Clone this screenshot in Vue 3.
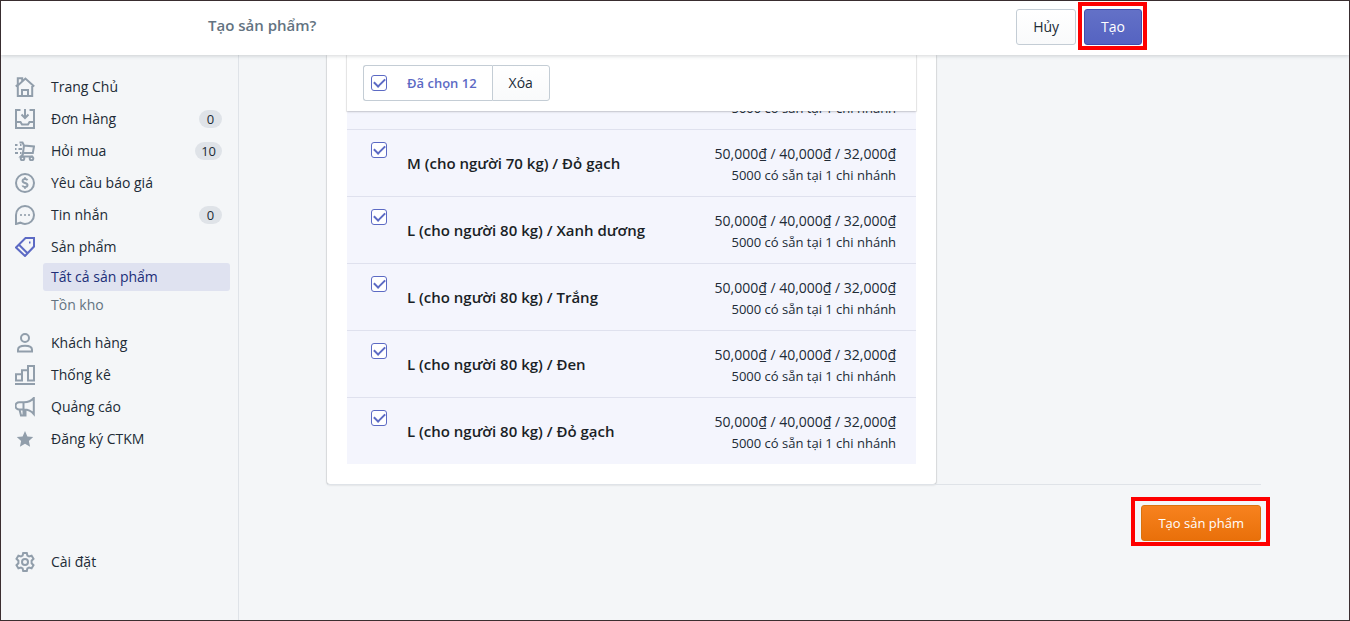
<script setup>
import {ref, computed} from "vue";

const menu = [
  {icon: 'home', label: 'Trang Chủ'},
  {icon: 'orders', label: 'Đơn Hàng', badge: 0},
  {icon: 'cart', label: 'Hỏi mua', badge: 10},
  {icon: 'quote', label: 'Yêu cầu báo giá'},
  {icon: 'chat', label: 'Tin nhắn', badge: 0},
  {icon: 'tag', label: 'Sản phẩm', active: true, children: ['Tất cả sản phẩm', 'Tồn kho']},
  {icon: 'user', label: 'Khách hàng'},
  {icon: 'stats', label: 'Thống kê'},
  {icon: 'ads', label: 'Quảng cáo'},
  {icon: 'star', label: 'Đăng ký CTKM'},
]

// svg contents, all drawn on a 20x20 grid
const icons = {
  home: '<path d="M2.8 9v10h14.4V9M.8 9.6 3 7.6M19.2 9.6 10.4 1.6 2.8 8.4V1.3h4.4v2.8M7 19v-6h6v6"/>',
  orders: '<path d="M5.5 1H1v18h18V1h-4.500M10 0v8.500M6.500 5.500 10 9l3.500-3.500M1 13h4.500l1.500 2.500h6l1.500-2.500H19"/>',
  cart: '<path d="M4.500 1.500h3L9 4.500l10 1-1.200 6.500H8.500M9 4.500 7.800 13.500 5.800 15.500H18M0 4h2.500M5 4h1.500M0 8h1.500M3.500 8H7M0 12h3M5 12h1.500"/><circle cx="7.500" cy="17.500" r="1.800"/><circle cx="16.500" cy="17.500" r="1.800"/>',
  quote: '<circle cx="10" cy="10" r="9"/><path d="M12.500 7.200C12 6.300 11 6 10 6c-1.500 0-2.400.8-2.400 1.900C7.600 10.600 12.500 9.300 12.500 12c0 1.200-1 2-2.500 2-1.200 0-2.200-.5-2.600-1.500M10 4.200V6M10 14v1.800"/>',
  chat: '<path d="M1 19V10a9 9 0 1 1 9 9c-1.800 0-3.300-.5-4.600-1.300Z"/><path d="M5.200 10h1.600M9.200 10h1.600M13.200 10h1.600"/>',
  tag: '<path d="M1 10.500 10.500 1H19v8.500L10 19ZM4 7.800l8.500 8.500"/><path d="M14 5.500h1.500"/>',
  user: '<circle cx="10" cy="5" r="4"/><path d="M3 18.500v-1.800C3 14.500 5.500 12.800 10 12.800s7 1.700 7 3.900v1.800Z"/>',
  stats: '<path d="M0 19h20M1 15.500V9.300h6v6.200ZM7 15.500V5.300h6v10.200M13 15.500V1h6v14.500Z"/>',
  ads: '<path d="M18.800 1c-2.500 2.800-5.500 4.200-9.800 4.200H4.200a3.600 3.600 0 0 0 0 7.300H9c4.300 0 7.300 1.500 9.800 4.500ZM8.500 5.200v13.300H6L4.500 12.500M8.500 18.500h2v-6"/>',
  star: '<path class="solid" d="m10 2 2.400 5.400 5.800.6-4.300 3.900 1.200 5.800L10 14.800l-5.100 2.900 1.200-5.800L1.800 8l5.800-.6Z"/>',
  gear: '<path d="M8.200 1h3.600l.6 2.500 1.700 1 2.500-.8 1.900 3.100-1.900 1.900v2.600l1.900 1.900-1.900 3.100-2.500-.8-1.700 1-.6 2.500H8.200l-.6-2.500-1.700-1-2.500.8-1.900-3.100 1.900-1.900V8.700L1.500 6.800l1.900-3.100 2.500.8 1.700-1Z"/><circle cx="10" cy="10" r="3"/>',
}

const variants = ref([
  {name: 'M (cho người 70 kg) / Đỏ gạch', checked: true},
  {name: 'L (cho người 80 kg) / Xanh dương', checked: true},
  {name: 'L (cho người 80 kg) / Trắng', checked: true},
  {name: 'L (cho người 80 kg) / Đen', checked: true},
  {name: 'L (cho người 80 kg) / Đỏ gạch', checked: true},
])

const prices = '50,000₫ / 40,000₫ / 32,000₫'
const stock = '5000 có sẵn tại 1 chi nhánh'

// the variants above the visible part of the list
const above = 7
const selected = computed(() => above + variants.value.filter(v => v.checked).length)
const all = computed({
  get: () => variants.value.every(v => v.checked),
  set: (val) => variants.value.forEach(v => v.checked = val),
})
</script>

<template>
  <div class="app">

    <header class="topbar">
      <div class="topbar_inner">
        <h1>Tạo sản phẩm?</h1>
        <div class="actions">
          <button type="button" class="btn">Hủy</button>
          <span class="marked">
            <button type="button" class="btn primary">Tạo</button>
          </span>
        </div>
      </div>
    </header>

    <div class="body">
      <nav class="sidebar">
        <ul class="menu">
          <li v-for="item in menu" :key="item.label">
            <a href="#" class="item" :class="{active: item.active}">
              <svg viewBox="0 0 20 20" v-html="icons[item.icon]"></svg>
              <span class="label">{{ item.label }}</span>
              <span v-if="item.badge !== undefined" class="badge">{{ item.badge }}</span>
            </a>
            <ul v-if="item.children" class="submenu">
              <li v-for="(child, i) in item.children" :key="child">
                <a href="#" class="subitem" :class="{current: i === 0}">{{ child }}</a>
              </li>
            </ul>
          </li>
        </ul>
        <a href="#" class="item settings">
          <svg viewBox="0 0 20 20" v-html="icons.gear"></svg>
          <span class="label">Cài đặt</span>
        </a>
      </nav>

      <main class="main">
        <div class="page">
          <section class="card">
            <div class="toolbar">
              <div class="group">
                <label class="select_all">
                  <input type="checkbox" class="check" v-model="all"/>
                  <span>Đã chọn {{ selected }}</span>
                </label>
                <button type="button" class="btn joined">Xóa</button>
              </div>
            </div>

            <div class="row clipped">
              <div class="info">
                <div class="stock">{{ stock }}</div>
              </div>
            </div>

            <label v-for="v in variants" :key="v.name" class="row">
              <input type="checkbox" class="check" v-model="v.checked"/>
              <span class="name">{{ v.name }}</span>
              <span class="info">
                <span class="price">{{ prices }}</span>
                <span class="stock">{{ stock }}</span>
              </span>
            </label>
          </section>

          <footer class="page_actions">
            <span class="marked wide">
              <button type="button" class="btn create">Tạo sản phẩm</button>
            </span>
          </footer>
        </div>
      </main>
    </div>

  </div>
</template>

<style>
body {
  margin: 0;
  background: #f4f6f8;
}
</style>

<style scoped>
* {
  box-sizing: border-box;
}

.app {
  display: flex;
  flex-direction: column;
  min-height: 100vh;
  border: 1px solid #3b2e30;
  background: #f4f6f8;
  color: #212b36;
  font-family: "Segoe UI", "Open Sans", "Noto Sans", sans-serif;
  font-size: 14px;
  line-height: 20px;
}

.topbar {
  position: relative;
  z-index: 1;
  padding: 8px 20px 10px;
  background: #fff;
  box-shadow: 0 1px 4px rgba(33, 43, 54, 0.2);
}

.topbar_inner {
  display: flex;
  justify-content: space-between;
  align-items: flex-start;
  max-width: 934px;
  margin: 0 auto;
}

h1 {
  margin: 0;
  color: #637381;
  font-size: 15px;
  font-weight: 600;
  line-height: 32px;
}

.actions {
  display: flex;
  gap: 8px;
}

.btn {
  display: block;
  height: 36px;
  padding: 0 16px;
  border: 1px solid #c4cdd5;
  border-radius: 3px;
  background: linear-gradient(to bottom, #fff, #f9fafb);
  color: #212b36;
  font-family: inherit;
  font-size: 14px;
  line-height: 20px;
  cursor: pointer;
}

.primary {
  border-color: #3f4eae;
  background: linear-gradient(to bottom, #6371c7, #5563c1);
  color: #fff;
}

.create {
  border-color: #d9730f;
  background: linear-gradient(to bottom, #f7821e, #e9700a);
  color: #fff;
  font-size: 13px;
  font-weight: 500;
}

.marked {
  position: relative;
}

.marked::after {
  content: "";
  position: absolute;
  inset: -7px -5px -5px -6px;
  border: 4px solid #fe0000;
  pointer-events: none;
}

.wide::after {
  inset: -8px -9px -5px -10px;
}

.body {
  display: flex;
  flex: 1;
}

.sidebar {
  display: flex;
  flex-direction: column;
  flex: 0 0 238px;
  padding: 16px 8px 42px 14px;
  border-right: 1px solid #dfe3e8;
}

ul {
  margin: 0;
  padding: 0;
  list-style: none;
}

.item {
  display: flex;
  align-items: center;
  gap: 16px;
  height: 32px;
  padding-right: 8px;
  color: #212b36;
  font-weight: 500;
  text-decoration: none;
}

.item svg {
  flex: none;
  width: 20px;
  height: 20px;
  fill: none;
  stroke: #919eab;
  stroke-width: 2;
}

.item svg :deep(.solid) {
  fill: #919eab;
  stroke: none;
}

.item.active svg {
  stroke: #5c6ac4;
}

.label {
  flex: 1;
}

.badge {
  min-width: 23px;
  padding: 0 6px;
  border-radius: 10px;
  background: #dfe3e8;
  font-size: 13px;
  line-height: 18px;
  text-align: center;
}

.submenu {
  padding: 0 0 8px 28px;
}

.subitem {
  display: block;
  padding: 4px 8px;
  border-radius: 3px;
  color: #637381;
  text-decoration: none;
}

.current {
  background: #dfe2f0;
  color: #202e78;
  font-weight: 500;
}

.settings {
  margin-top: auto;
}

.main {
  flex: 1;
  padding: 0 20px;
}

.page {
  max-width: 934px;
  margin: 0 auto;
}

.card {
  width: calc(65% + 2px);
  padding: 0 20px 20px;
  border-radius: 0 0 3px 3px;
  background: #fff;
  box-shadow: 0 0 0 1px rgba(63, 63, 68, 0.08), 0 1px 2px rgba(63, 63, 68, 0.25);
}

.toolbar {
  position: relative;
  padding: 10px 16px;
  box-shadow: 0 0 0 1px rgba(63, 63, 68, 0.08), 0 1px 2px rgba(63, 63, 68, 0.2);
}

.group {
  display: flex;
}

.select_all {
  display: flex;
  align-items: center;
  gap: 20px;
  height: 36px;
  padding: 0 15px 0 7px;
  border: 1px solid #c4cdd5;
  border-right: 0;
  border-radius: 3px 0 0 3px;
  color: #5c6ac4;
  font-size: 13px;
  font-weight: 600;
}

.joined {
  border-radius: 0 3px 3px 0;
}

.check {
  appearance: none;
  flex: none;
  display: grid;
  place-items: center;
  width: 16px;
  height: 16px;
  margin: 0;
  border: 1px solid #5c6ac4;
  border-radius: 3px;
  background: #fff;
}

.check:checked::before {
  content: "";
  width: 9px;
  height: 5px;
  margin-bottom: 3px;
  border: solid #5c6ac4;
  border-width: 0 0 2px 2px;
  transform: rotate(-45deg);
}

.row {
  display: flex;
  align-items: center;
  gap: 20px;
  height: 67px;
  padding: 0 20px 0 24px;
  border-top: 1px solid #dfe1ee;
  background: #f4f5fd;
}

.row .check {
  align-self: flex-start;
  margin-top: 12px;
}

.clipped {
  align-items: flex-end;
  height: 18px;
  padding-bottom: 11px;
  border-top: 0;
  overflow: hidden;
}

.name {
  flex: 1;
  color: #1a1f26;
  font-size: 15px;
  font-weight: 600;
}

.info {
  display: flex;
  flex-direction: column;
  margin-left: auto;
  padding-top: 2px;
  text-align: right;
}

.price {
  line-height: 22px;
}

.stock {
  font-size: 13px;
}

.page_actions {
  display: flex;
  justify-content: flex-end;
  padding: 20px 0;
  border-top: 1px solid #dfe3e8;
}
</style>
